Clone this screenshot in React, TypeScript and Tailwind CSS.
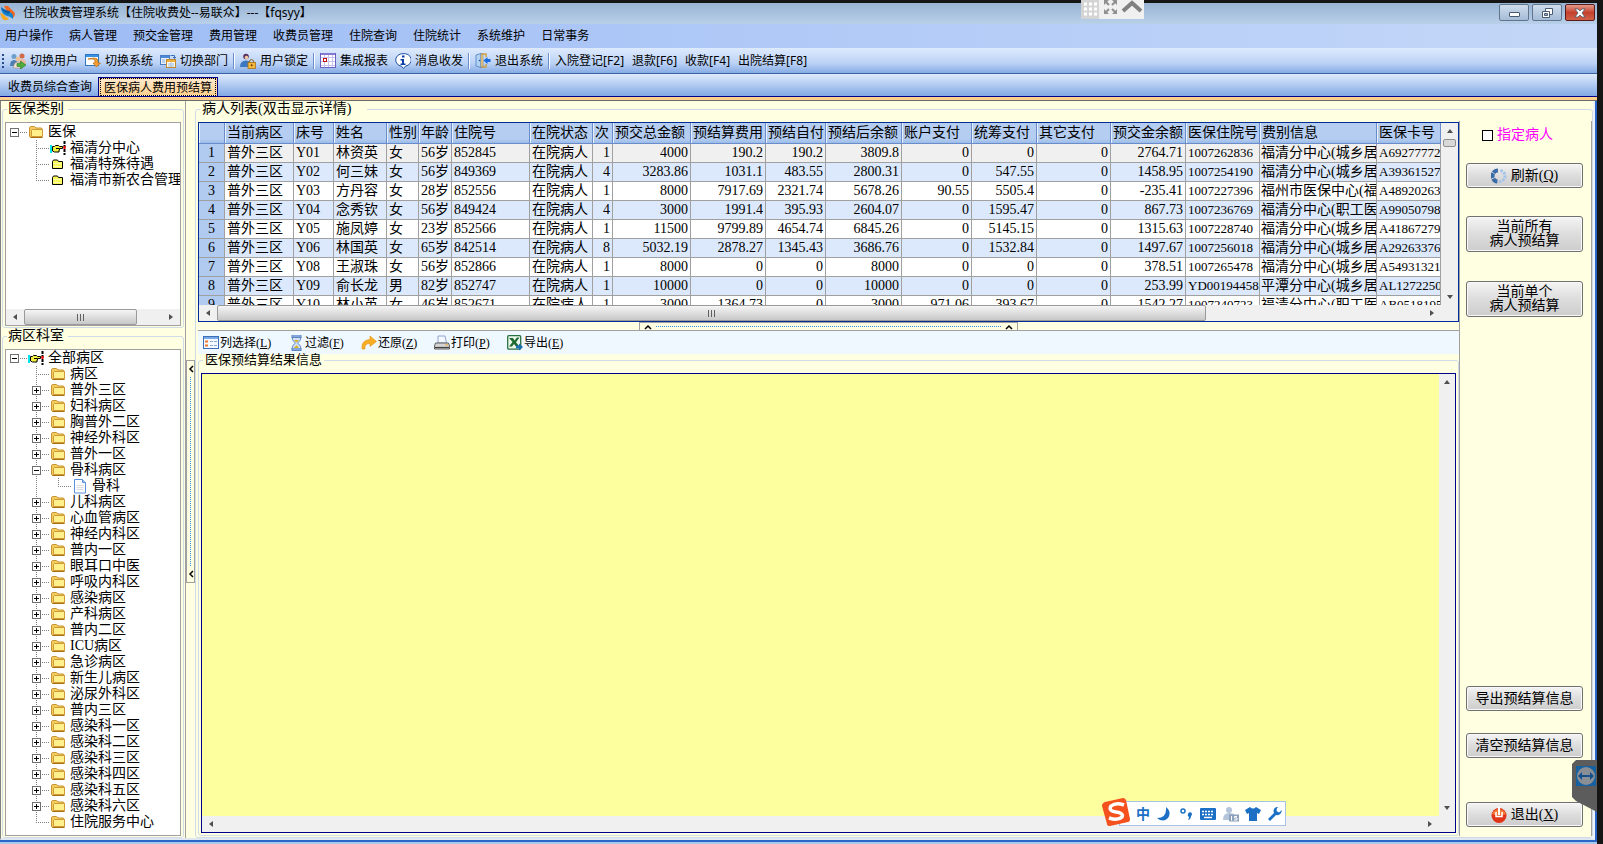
import { useState } from "react";
import type { ReactNode } from "react";

const MENUS = ["用户操作", "病人管理", "预交金管理", "费用管理", "收费员管理", "住院查询", "住院统计", "系统维护", "日常事务"];

const COLUMNS = [
  { label: "", width: "w-[26px]", cell: "bg-[#b0caf0] text-center" },
  { label: "当前病区", width: "w-[69px]", cell: "pl-[2px]" },
  { label: "床号", width: "w-[40px]", cell: "pl-[2px]" },
  { label: "姓名", width: "w-[53px]", cell: "pl-[2px]" },
  { label: "性别", width: "w-[32px]", cell: "pl-[2px]" },
  { label: "年龄", width: "w-[33px]", cell: "pl-[2px]" },
  { label: "住院号", width: "w-[78px]", cell: "pl-[2px]" },
  { label: "在院状态", width: "w-[63px]", cell: "pl-[2px]" },
  { label: "次", width: "w-[20px]", cell: "pr-[2px] text-right" },
  { label: "预交总金额", width: "w-[78px]", cell: "pr-[2px] text-right" },
  { label: "预结算费用", width: "w-[75px]", cell: "pr-[2px] text-right" },
  { label: "预结自付", width: "w-[60px]", cell: "pr-[2px] text-right" },
  { label: "预结后余额", width: "w-[76px]", cell: "pr-[2px] text-right" },
  { label: "账户支付", width: "w-[70px]", cell: "pr-[2px] text-right" },
  { label: "统筹支付", width: "w-[65px]", cell: "pr-[2px] text-right" },
  { label: "其它支付", width: "w-[74px]", cell: "pr-[2px] text-right" },
  { label: "预交金余额", width: "w-[75px]", cell: "pr-[2px] text-right" },
  { label: "医保住院号", width: "w-[74px]", cell: "pl-[2px] text-[13px]" },
  { label: "费别信息", width: "w-[117px]", cell: "pl-px" },
  { label: "医保卡号", width: "", cell: "pl-[2px] text-[13px]" },
];

const PATIENTS = [
  ["1", "普外三区", "Y01", "林资英", "女", "56岁", "852845", "在院病人", "1", "4000", "190.2", "190.2", "3809.8", "0", "0", "0", "2764.71", "1007262836", "福清分中心(城乡居", "A69277772"],
  ["2", "普外三区", "Y02", "何三妹", "女", "56岁", "849369", "在院病人", "4", "3283.86", "1031.1", "483.55", "2800.31", "0", "547.55", "0", "1458.95", "1007254190", "福清分中心(城乡居", "A39361527"],
  ["3", "普外三区", "Y03", "方丹容", "女", "28岁", "852556", "在院病人", "1", "8000", "7917.69", "2321.74", "5678.26", "90.55", "5505.4", "0", "-235.41", "1007227396", "福州市医保中心(福", "A48920263"],
  ["4", "普外三区", "Y04", "念秀钦", "女", "56岁", "849424", "在院病人", "4", "3000", "1991.4", "395.93", "2604.07", "0", "1595.47", "0", "867.73", "1007236769", "福清分中心(职工医", "A99050798"],
  ["5", "普外三区", "Y05", "施凤婷", "女", "23岁", "852566", "在院病人", "1", "11500", "9799.89", "4654.74", "6845.26", "0", "5145.15", "0", "1315.63", "1007228740", "福清分中心(城乡居", "A41867279"],
  ["6", "普外三区", "Y06", "林国英", "女", "65岁", "842514", "在院病人", "8", "5032.19", "2878.27", "1345.43", "3686.76", "0", "1532.84", "0", "1497.67", "1007256018", "福清分中心(城乡居", "A29263376"],
  ["7", "普外三区", "Y08", "王淑珠", "女", "56岁", "852866", "在院病人", "1", "8000", "0", "0", "8000", "0", "0", "0", "378.51", "1007265478", "福清分中心(城乡居", "A54931321"],
  ["8", "普外三区", "Y09", "俞长龙", "男", "82岁", "852747", "在院病人", "1", "10000", "0", "0", "10000", "0", "0", "0", "253.99", "YD00194458", "平潭分中心(城乡居", "AL1272250"],
  ["9", "普外三区", "Y10", "林小英", "女", "46岁", "852671", "在院病人", "1", "3000", "1364.73", "0", "3000", "971.06", "393.67", "0", "1542.27", "1007240723", "福清分中心(职工医", "AB0518195"],
];

type Node = { label: string; level: number; icon: "folder" | "hand" | "small" | "doc"; mark?: "plus" | "minus"; last?: boolean };

const INSURANCE: Node[] = [
  { label: "医保", level: 0, icon: "folder", mark: "minus" },
  { label: "福清分中心", level: 1, icon: "hand" },
  { label: "福清特殊待遇", level: 1, icon: "small" },
  { label: "福清市新农合管理", level: 1, icon: "small", last: true },
];

const ward = (label: string): Node => ({ label, level: 1, icon: "folder", mark: "plus" });

const WARDS: Node[] = [
  { label: "全部病区", level: 0, icon: "hand", mark: "minus" },
  { label: "病区", level: 1, icon: "folder" },
  ...["普外三区", "妇科病区", "胸普外二区", "神经外科区", "普外一区"].map(ward),
  { label: "骨科病区", level: 1, icon: "folder", mark: "minus" },
  { label: "骨科", level: 2, icon: "doc", last: true },
  ...[
    "儿科病区", "心血管病区", "神经内科区", "普内一区", "眼耳口中医", "呼吸内科区", "感染病区", "产科病区", "普内二区",
    "ICU病区", "急诊病区", "新生儿病区", "泌尿外科区", "普内三区", "感染科一区", "感染科二区", "感染科三区",
    "感染科四区", "感染科五区", "感染科六区",
  ].map(ward),
  { label: "住院服务中心", level: 1, icon: "folder", last: true },
];

const UI = "font-['Noto_Sans','Noto_Sans_CJK_SC',sans-serif]";
const BUTTON =
  "flex shrink-0 items-center justify-center rounded-[3px] border border-[#707070] bg-linear-to-b from-[#f4f4f4] from-0% via-[#dddddd] via-50% to-[#cdcdcd] leading-[14px] shadow-[inset_0_0_0_1px_#f8f8f8]";

/* ---------- icons ---------- */

function TreeIcon({ kind }: { kind: Node["icon"] }) {
  if (kind === "folder")
    return (
      <svg className="h-4 w-4 shrink-0" viewBox="0 0 16 16">
        <path d="M1.500 12.500V4q0-1 1-1.500h4l1.500 1.500h5q1 0 1 1v8.500H3z" fill="#f3cd60" stroke="#c8922c" />
        <path d="M3.500 12.500V6.500q0-1 1-1h10v7z" fill="#fff08c" stroke="#d09a38" />
        <path d="M2.500 13.500h12" stroke="#a87010" />
      </svg>
    );
  if (kind === "hand")
    return (
      <svg className="h-4 w-4 shrink-0" viewBox="0 0 16 16">
        <path d="M0 5h2v8H0z" fill="#00e5f0" />
        <path d="M2.500 6.500h2l1-1h3l1 1h3v2H9.500v1.500H9V12H4.500l-2-1z" fill="#f4f040" stroke="#000" />
        <path d="M6 8.500h3" stroke="#000" />
        <path d="M14.500 1v14" stroke="#000" strokeWidth="2" strokeDasharray="3 1" />
        <path d="M14.500 6v3" stroke="#f00" strokeWidth="2" />
      </svg>
    );
  if (kind === "small")
    return (
      <svg className="h-4 w-4 shrink-0" viewBox="0 0 16 16">
        <path d="M2.500 12.500v-7l1-1.500h4l1 1.500h4v7z" fill="#f8f85a" stroke="#000" />
        <path d="M3.500 7.500h8" stroke="#fff" strokeDasharray="1 1" />
        <path d="M3.500 10.500h8" stroke="#fff" strokeDasharray="1 1" />
      </svg>
    );
  return (
    <svg className="h-4 w-4 shrink-0" viewBox="0 0 16 16">
      <path d="M2.500 1.500h8l3 3v10.500h-11z" fill="#fafcff" stroke="#5d92d8" />
      <path d="M10.500 1.500v3h3" fill="#9cc2f0" stroke="#5d92d8" />
      <path d="M4.500 7.500h7M4.500 9.500h7M4.500 11.500h7" stroke="#dcdcdc" />
    </svg>
  );
}

function Arrow({ dir }: { dir: "up" | "down" | "left" | "right" }) {
  const d = { up: "M1 6l3-4 3 4z", down: "M1 2l3 4 3-4z", left: "M6 1L2 4l4 3z", right: "M2 1l4 3-4 3z" }[dir];
  return (
    <svg className="h-2 w-2" viewBox="0 0 8 8">
      <path d={d} fill="#505050" />
    </svg>
  );
}

const UsersIcon = () => (
  <svg className="h-4 w-4" viewBox="0 0 16 16">
    <circle cx="4" cy="3.500" r="2.500" fill="#6fa0cc" />
    <circle cx="12" cy="3" r="2.500" fill="#d06a48" />
    <path d="M0 13q0-6 4-6t4 6z" fill="#4d7fb0" />
    <path d="M9 10q0-4 3.500-4T16 11z" fill="#f0b8a0" />
    <circle cx="8" cy="6" r="2.300" fill="#f0c090" />
    <path d="M3.500 15q0-6 4.500-6 3 0 4 3v3z" fill="#f2e2d4" stroke="#a08070" strokeWidth=".5" />
    <path d="M7 10.500h3.500V8L16 12l-5.500 4v-2.500H7z" fill="#4fae3a" stroke="#2a7a20" strokeWidth=".6" />
  </svg>
);

const SystemIcon = () => (
  <svg className="h-4 w-4" viewBox="0 0 16 16">
    <rect x=".5" y="1.500" width="13" height="11" fill="#fff" stroke="#2b78c8" />
    <path d="M1 2h12v2H1z" fill="#3a90e0" />
    <path d="M3 6h5q2 0 2 3v1h-2l3.500 4L15.500 10H13V8q0-3-4-3z" fill="#f5a030" stroke="#c06a10" strokeWidth=".7" />
  </svg>
);

const DeptIcon = () => (
  <svg className="h-4 w-4" viewBox="0 0 16 16">
    <rect x=".5" y="2.500" width="9" height="9" fill="#e6f0fc" stroke="#4a7cc0" />
    <path d="M1 3h8v2H1z" fill="#4a88d8" />
    <path d="M2 7h3M2 9h3" stroke="#8fb0dc" />
    <rect x="6.500" y="6.500" width="9" height="8" fill="#fffaf0" stroke="#c08a30" />
    <path d="M7 7h8v2H7z" fill="#f0b040" />
    <path d="M8 11h6M8 13h6M11 9v5" stroke="#a0c0e0" />
    <path d="M10.500 2.500h4v3M13 4l1.500 1.500L16 4" fill="none" stroke="#3a70c0" />
  </svg>
);

const LockIcon = () => (
  <svg className="h-4 w-4" viewBox="0 0 16 16">
    <circle cx="6" cy="3.500" r="2.800" fill="#5a3060" />
    <circle cx="6.500" cy="4.500" r="1.800" fill="#f0c8a0" />
    <path d="M0 14q0-6.500 6-6.500T11 14z" fill="#3c78c0" />
    <path d="M9.500 10V8q2-3 4 0v2" fill="none" stroke="#907040" strokeWidth="1.200" />
    <rect x="8" y="9.500" width="7.500" height="6" fill="#f5b840" stroke="#a87010" strokeWidth=".8" />
    <circle cx="11.700" cy="12.300" r="1" fill="#6a4000" />
  </svg>
);

const ReportIcon = () => (
  <svg className="h-4 w-4" viewBox="0 0 16 16">
    <rect x=".5" y=".5" width="15" height="14" fill="#fff" stroke="#6a60c0" />
    <path d="M1 4.500h14M1 8.500h14M1 12.500h14M4.500 1v13M8.500 1v13M12.500 1v13" stroke="#c8c2ee" />
    <path d="M1 1h14" stroke="#8478d0" strokeWidth="2" />
    <rect x="3.500" y="5.500" width="3" height="3" fill="#fff" stroke="#c01010" />
  </svg>
);

const InfoIcon = () => (
  <svg className="h-4 w-4" viewBox="0 0 16 16">
    <path d="M8 .7a7 6.300 0 0 1 2.500 12.400L8.500 15.500 6.500 13.200A7 6.300 0 0 1 8 .7z" fill="#fff" stroke="#1d4fa0" />
    <path d="M7 2.500h2.500v2H7zM5.500 6H9v4.500h1.500V12h-5v-1.500H7V7.500H5.500z" fill="#0a3fa8" />
  </svg>
);

const DoorIcon = () => (
  <svg className="h-4 w-4" viewBox="0 0 16 16">
    <path d="M1 2l5-1.500v14L1 13z" fill="#b4d2f2" stroke="#4a80c0" strokeWidth=".8" />
    <path d="M7 1h4v3M7 14h4v-3" fill="none" stroke="#d0a040" strokeWidth="1.500" />
    <path d="M6 .5l2 1v12l-2 1z" fill="#f0d890" stroke="#806040" strokeWidth=".5" />
    <path d="M15.500 6v3h-3v2L8.500 7.500l4-3.500v2z" fill="#1a6ae0" />
    <circle cx="4.500" cy="7.500" r=".8" fill="#1a50a0" />
  </svg>
);

const ColumnsIcon = () => (
  <svg className="h-4 w-4" viewBox="0 0 16 16">
    <rect x=".5" y="1.500" width="15" height="12" fill="#f4f9ff" stroke="#3c6eb8" />
    <path d="M1 3h14" stroke="#78a8e8" strokeWidth="2" />
    <path d="M2 5.500h3v2H2zM2 9.500h3v2H2z" fill="#f07828" />
    <path d="M7 6.500h3M11 6.500h3M7 10.500h3M11 10.500h3" stroke="#8aa8d0" />
  </svg>
);

const FilterIcon = () => (
  <svg className="h-4 w-4" viewBox="0 0 16 16">
    <path d="M4 2h9q0 4-3.500 6Q13 10 13 14H4q0-4 3.500-6Q4 6 4 2z" fill="#cfe2f8" stroke="#6888c0" />
    <path d="M3.500 0h10v3h-10zM3.500 13h10v3h-10z" fill="#5e86c4" />
    <path d="M4.500 1h8M4.500 14h8" stroke="#a8c4ec" />
    <path d="M6 5h5L8.500 7.500zM6 13l2.500-3 2.500 3z" fill="#d8b020" />
  </svg>
);

const RestoreIcon = () => (
  <svg className="h-4 w-4" viewBox="0 0 16 16">
    <path d="M1 14Q0 5 9 4.500V1l6.500 5.500-6.500 5V8.500Q3 8.500 4 14z" fill="#f8ae24" stroke="#e09010" strokeWidth=".6" />
  </svg>
);

const PrintIcon = () => (
  <svg className="h-4 w-4" viewBox="0 0 16 16">
    <path d="M4 8V1h7l1.500 7z" fill="#f4f8ff" stroke="#7890c0" strokeWidth=".8" />
    <path d="M1.500 8h13l1 3v3H.5v-3z" fill="#d4d4d4" stroke="#505050" strokeWidth=".9" />
    <path d="M1 12.500h14" stroke="#404040" strokeWidth="1.200" />
    <path d="M11 10h3" stroke="#f0a030" />
  </svg>
);

const ExcelIcon = () => (
  <svg className="h-4 w-4" viewBox="0 0 16 16">
    <rect x=".7" y=".7" width="13" height="13.500" rx="1" fill="#eef8ee" stroke="#2a7040" strokeWidth="1.300" />
    <path d="M2 3h4l1.500 2.500L10 2.500h2.500L9 7.300 12.500 11.500H9L7 9l-2 2.500H2L5.500 7z" fill="#1f6a30" />
    <path d="M9 10.500h3V8.500l4 3.500-4 3.500v-2H9z" fill="#1a70b0" />
  </svg>
);

/* ---------- small parts ---------- */

function Key({ text, k }: { text: string; k: string }) {
  return (
    <span>
      {text}(<u>{k}</u>)
    </span>
  );
}

function Tree({ nodes, label }: { nodes: Node[]; label: string }) {
  return (
    <ul aria-label={label}>
      {nodes.map((n) => {
        const x = n.level === 2 ? 26 : 4;
        const root = n.level === 0;
        return (
          <li key={n.label} className={`flex h-4 items-center whitespace-nowrap ${root ? "pl-1" : "pl-[26px]"}`}>
            <svg className={`h-4 shrink-0 ${n.level === 2 ? "w-10" : "w-[18px]"}`} viewBox={n.level === 2 ? "0 0 40 16" : "0 0 18 16"}>
              {n.level === 2 && <path d="M4.500 0v16" stroke="#808080" strokeDasharray="1 1" />}
              {!root && <path d={`M${x}.5 0v${n.last ? 8 : 16}`} stroke="#808080" strokeDasharray="1 1" />}
              <path d={`M${x} 8.500h13`} stroke="#808080" strokeDasharray="1 1" />
              {n.mark && <rect x=".5" y="4.500" width="8" height="8" fill="#fff" stroke="#707070" />}
              {n.mark && <path d={n.mark === "plus" ? "M2 8.500h5M4.500 6v5" : "M2 8.500h5"} stroke="#000" />}
            </svg>
            <TreeIcon kind={n.icon} />
            <span className="ml-1">{n.label}</span>
          </li>
        );
      })}
    </ul>
  );
}

function HScroll({ thumb }: { thumb?: string }) {
  return (
    <div className="flex h-4 shrink-0 items-center bg-[#f0f0f0]">
      <button aria-label="向左" className="flex w-[18px] shrink-0 justify-center">
        <Arrow dir="left" />
      </button>
      <div className="flex h-full flex-1">
        {thumb && (
          <div className={`flex items-center justify-center gap-[2px] rounded-[2px] border border-[#9a9a9a] bg-linear-to-b from-[#f5f5f5] to-[#c8c8c8] ${thumb}`}>
            <i className="h-[7px] w-px bg-[#606060]" />
            <i className="h-[7px] w-px bg-[#606060]" />
            <i className="h-[7px] w-px bg-[#606060]" />
          </div>
        )}
      </div>
      <button aria-label="向右" className="flex w-[18px] shrink-0 justify-center">
        <Arrow dir="right" />
      </button>
    </div>
  );
}

function Tool({ icon, children }: { icon?: ReactNode; children: ReactNode }) {
  return (
    <button className="flex items-center gap-1 whitespace-nowrap">
      {icon}
      {children}
    </button>
  );
}

function GridTool({ icon, text, k }: { icon: ReactNode; text: string; k: string }) {
  return (
    <button className="flex min-w-[59px] items-center gap-px whitespace-nowrap">
      {icon}
      <Key text={text} k={k} />
    </button>
  );
}

const Divider = () => <i className="mx-[5px] h-4 w-[2px] border-l border-[#6a8ccb] bg-white" />;

function TitleBar() {
  return (
    <header className={`flex h-[21px] shrink-0 items-center bg-linear-to-b from-[#98b4d2] to-[#b9d0ea] pb-[2px] text-xs ${UI}`}>
      <svg className="h-4 w-[15px]" viewBox="0 0 15 16">
        <path d="M4 1q4-1 6 2l5 5q0 3-2 5L9 8Q6 6 4 1z" fill="#f06820" />
        <path d="M0 8q3 0 5 3l4 3q-5 3-7-1z" fill="#f8a820" />
        <path d="M1 2q3 5 8 5 5 1 4 7-3-3-6-3-6-2-6-9z" fill="#1583d0" />
        <path d="M1 2q5 4 9 4l-1 3Q3 8 1 2z" fill="#1060a8" />
      </svg>
      <h1 className="ml-2">住院收费管理系统【住院收费处--易联众】---【fqsyy】</h1>
      <div className="mr-[2px] ml-auto flex gap-[3px]">
        <button aria-label="最小化" className="flex h-[17px] w-[30px] items-center justify-center rounded-[2px] border border-[#61758c] bg-linear-to-b from-[#cfdded] to-[#a5bcd6]">
          <i className="mt-1 h-[5px] w-[11px] rounded-[1px] border border-[#4b5a6c] bg-white" />
        </button>
        <button aria-label="还原" className="flex h-[17px] w-[30px] items-center justify-center rounded-[2px] border border-[#61758c] bg-linear-to-b from-[#cfdded] to-[#a5bcd6]">
          <svg className="h-3 w-3" viewBox="0 0 12 12">
            <path d="M4.500 1.500h7v6h-7z" fill="#fff" stroke="#4b5a6c" />
            <path d="M1.500 4.500h7v6h-7z" fill="#fff" stroke="#4b5a6c" />
            <path d="M3.500 6.500h3v2h-3z" fill="#9db4cf" stroke="#4b5a6c" />
          </svg>
        </button>
        <button aria-label="关闭" className="flex h-[17px] w-[30px] items-center justify-center rounded-[2px] border border-[#5a1a1a] bg-linear-to-b from-[#e09a8c] from-0% via-[#c4402c] via-50% to-[#d06048]">
          <svg className="h-[10px] w-3" viewBox="0 0 12 10">
            <path d="M1 1h3l2 2 2-2h3L8 5l3 4H8L6 7 4 9H1l3-4z" fill="#fff" stroke="#4a5a70" strokeWidth=".8" />
          </svg>
        </button>
      </div>
    </header>
  );
}

function MainToolbar() {
  return (
    <div className={`flex h-[26px] shrink-0 items-center border-b border-[#3a62a4] bg-linear-to-b from-[#deeafd] from-0% via-[#bcd3f6] via-60% to-[#86abe4] pl-[2px] text-xs ${UI}`}>
      <i className="mr-[6px] h-[14px] border-l-2 border-dotted border-[#2a4a8c]" />
      <div className="flex gap-[7px]">
        <Tool icon={<UsersIcon />}>切换用户</Tool>
        <Tool icon={<SystemIcon />}>切换系统</Tool>
        <Tool icon={<DeptIcon />}>切换部门</Tool>
      </div>
      <Divider />
      <Tool icon={<LockIcon />}>用户锁定</Tool>
      <Divider />
      <div className="flex gap-[7px]">
        <Tool icon={<ReportIcon />}>集成报表</Tool>
        <Tool icon={<InfoIcon />}>消息收发</Tool>
      </div>
      <Divider />
      <Tool icon={<DoorIcon />}>退出系统</Tool>
      <Divider />
      <div className="flex gap-2">
        <Tool>入院登记[F2]</Tool>
        <Tool>退款[F6]</Tool>
        <Tool>收款[F4]</Tool>
        <Tool>出院结算[F8]</Tool>
      </div>
    </div>
  );
}

function PatientGrid() {
  return (
    <div className="flex h-[200px] shrink-0 flex-col border border-[#002d96] bg-white">
      <div className="flex min-h-0 flex-1">
        <div className="min-w-0 flex-1 overflow-hidden">
          <table className="w-full table-fixed border-separate border-spacing-0 whitespace-nowrap">
            <colgroup>
              {COLUMNS.map((c) => (
                <col key={c.label} className={c.width} />
              ))}
            </colgroup>
            <thead>
              <tr>
                {COLUMNS.map((c) => (
                  <th key={c.label} className="overflow-hidden border-r border-b border-r-[#6a8ccb] border-b-[#6a8ccb] bg-linear-to-b from-[#b4cdf1] from-80% to-[#9abbe8] p-0 pl-[2px] text-left leading-[20px] font-normal shadow-[inset_1px_0_0_#e6f0fc]">
                    {c.label}
                  </th>
                ))}
              </tr>
            </thead>
            <tbody>
              {PATIENTS.map((row, r) => (
                <tr key={row[0]} className={r === 0 ? "bg-[#f0f0f0]" : r % 2 ? "bg-[#dce9fc]" : "bg-white"}>
                  {row.map((cell, i) => (
                    <td key={i} className={`overflow-hidden border-r border-b border-[#a0a0a0] p-0 leading-[18px] ${COLUMNS[i].cell}`}>
                      {cell}
                    </td>
                  ))}
                </tr>
              ))}
            </tbody>
          </table>
        </div>
        <div className="flex w-[17px] shrink-0 flex-col items-center justify-between bg-[#f0f0f0] py-1">
          <button aria-label="向上" className="flex flex-col items-center gap-1">
            <Arrow dir="up" />
            <i className="h-2 w-[13px] rounded-[2px] border border-[#909090] bg-[#d8d8d8]" />
          </button>
          <button aria-label="向下">
            <Arrow dir="down" />
          </button>
        </div>
      </div>
      <div className="flex bg-[#f0f0f0]">
        <div className="flex-1">
          <HScroll thumb="w-[82%]" />
        </div>
        <div className="w-[17px]" />
      </div>
    </div>
  );
}

function SidePanel() {
  return (
    <aside className="mt-1 flex w-[133px] shrink-0 flex-col border-x border-[#a0a0a0] pr-2 pb-[9px] pl-[6px]">
      <label className="mt-[6px] flex h-4 items-center gap-1 pl-4 text-[#ff00ff]">
        <input type="checkbox" className="h-[11px] w-[11px] appearance-none border border-black bg-white" />
        指定病人
      </label>
      <button className={`mt-[20px] h-[25px] gap-1 ${BUTTON}`}>
        <svg className="h-4 w-4" viewBox="0 0 16 16" fill="none">
          <path d="M7 2.500A5.500 5.500 0 0 0 7 13.500" stroke="#3a6ca8" strokeWidth="4" strokeDasharray="5 .6" />
          <path d="M8 13.500A5.500 5.500 0 0 0 9 2.500" stroke="#a4c4e8" strokeWidth="3" strokeDasharray="2.500 1" />
        </svg>
        <Key text="刷新" k="Q" />
      </button>
      <button className={`mt-[28px] h-[36px] ${BUTTON}`}>
        当前所有
        <br />
        病人预结算
      </button>
      <button className={`mt-[29px] h-[36px] ${BUTTON}`}>
        当前单个
        <br />
        病人预结算
      </button>
      <button className={`mt-auto h-[25px] ${BUTTON}`}>导出预结算信息</button>
      <button className={`mt-[22px] h-[25px] ${BUTTON}`}>清空预结算信息</button>
      <button className={`mt-[44px] h-[25px] gap-1 ${BUTTON}`}>
        <svg className="h-4 w-4" viewBox="0 0 16 16">
          <circle cx="8" cy="8.500" r="7.500" fill="#e03418" />
          <path d="M1 7a7.500 7.500 0 0 1 14 0Q8 10 1 7z" fill="#f47a3c" />
          <path d="M5 5v4.500h6V5" fill="none" stroke="#fff" strokeWidth="1.500" />
          <path d="M8 0v8" stroke="#fff" strokeWidth="2" />
        </svg>
        <Key text="退出" k="X" />
      </button>
    </aside>
  );
}

function ImeBar() {
  return (
    <div className="absolute right-[317px] bottom-[18px] flex h-[25px] w-[167px] items-center justify-between border border-[#a8c4e4] bg-white pr-[2px] pl-4 text-[#1b70c6]">
      <svg className="absolute -top-[5px] -left-[19px] h-[30px] w-[30px]" viewBox="0 0 30 30">
        <path d="M4 5L22 1q2 0 3 2l4 19q0 3-2 3L9 29q-3 0-3-2L1 9q0-3 3-4z" fill="#f4511e" />
        <path d="M23 8Q15 5 10 9q-3 5 5 6 8 1 6 5-4 4-13 1" fill="none" stroke="#fff" strokeWidth="3.500" />
      </svg>
      <span className={`text-[14px] font-bold ${UI}`}>中</span>
      <svg className="h-4 w-4" viewBox="0 0 16 16">
        <path d="M10 1q6 5 2 11-5 5-11 0 10 0 9-11z" fill="#1b70c6" />
      </svg>
      <svg className="h-4 w-4" viewBox="0 0 16 16">
        <circle cx="5" cy="5" r="2" fill="none" stroke="#1b70c6" strokeWidth="1.500" />
        <path d="M10 8a2 2 0 1 1 3 2q0 3-3 4 1-2 1-3-2-1-1-3z" fill="#1b70c6" />
      </svg>
      <svg className="h-4 w-4" viewBox="0 0 16 16">
        <rect y="2" width="16" height="12" rx="1" fill="#1b70c6" />
        <path d="M2 5.500h12M2 8.500h12" stroke="#fff" strokeWidth="1.500" strokeDasharray="2 1" />
        <path d="M4 11.500h8" stroke="#fff" strokeWidth="1.500" />
      </svg>
      <svg className="h-4 w-4" viewBox="0 0 16 16">
        <circle cx="6" cy="4" r="3" fill="#b4c4da" />
        <path d="M0 14Q0 7 6 7t6 3v4z" fill="#b4c4da" />
        <rect x="6" y="8.500" width="10" height="7" fill="#8ea2bd" />
        <path d="M8.500 10v4.500M14 10.500h-2.500v1.500H14v2h-3" fill="none" stroke="#fff" />
      </svg>
      <svg className="h-4 w-4" viewBox="0 0 16 16">
        <path d="M5 1q3 3 6 0l5 3-2 4-2-1v8H4V7L2 8 0 4z" fill="#1b70c6" />
      </svg>
      <svg className="h-4 w-4" viewBox="0 0 16 16">
        <path d="M15 4l-3 2.500-2.500-1.500L10 2l1.500-1Q7 .5 6.500 5l.5 2-6 6 2 2 6-6q5 1 6-5z" fill="#1b70c6" />
      </svg>
    </div>
  );
}

function Chevron({ up }: { up?: boolean }) {
  return (
    <svg className="h-2 w-2 shrink-0" viewBox="0 0 8 8">
      <path d={up ? "M1 6l3-3 3 3" : "M6 1L3 4l3 3"} fill="none" stroke="#000" strokeWidth="1.500" />
    </svg>
  );
}

function Splitter({ vertical }: { vertical?: boolean }) {
  return vertical ? (
    <div className="flex w-[9px] shrink-0 flex-col pt-[259px]">
      <div className="flex h-[223px] flex-col items-center border border-[#a0a0a0] py-1">
        <Chevron />
        <i className="my-1 flex-1 border-l border-dotted border-[#3a8af0]" />
        <Chevron />
      </div>
    </div>
  ) : (
    <div className="flex h-[9px] shrink-0 justify-center border-b border-[#a0a0a0]">
      <div className="flex w-[30%] items-center border border-b-0 border-[#a0a0a0] px-1">
        <Chevron up />
        <i className="mx-1 flex-1 border-t border-dotted border-[#3a8af0]" />
        <Chevron up />
      </div>
    </div>
  );
}

export default function App() {
  const [tab, setTab] = useState(1);

  return (
    <div className="relative h-screen overflow-hidden bg-[#151515] pt-[3px] pr-[6px] font-['Liberation_Serif','Noto_Sans_CJK_SC',sans-serif] text-sm text-black">
      <div className="flex h-full flex-col bg-[#2a66c8]">
        <TitleBar />

        <nav className={`flex h-6 shrink-0 items-center gap-4 bg-linear-to-r from-[#9dbcf5] to-[#c4d7f8] pl-[5px] text-xs ${UI}`}>
          {MENUS.map((m) => (
            <button key={m}>{m}</button>
          ))}
        </nav>

        <MainToolbar />

        {/* Tabs */}
        <div className={`flex h-[23px] shrink-0 items-end border-b border-[#00008b] bg-linear-to-b from-[#dfebfd] to-[#83a9e4] text-xs ${UI}`}>
          {["收费员综合查询", "医保病人费用预结算"].map((t, i) => (
            <button
              key={t}
              onClick={() => setTab(i)}
              className={`h-[19px] ${
                tab === i ? "border border-b-0 border-[#00008b] bg-[#ffd9a0] px-px" : "pt-px pr-[6px] pl-2 leading-[18px]"
              }`}
            >
              <span className={tab === i ? "block border border-dotted border-black bg-linear-to-b from-[#ffe9cc] to-[#ffcf8c] px-[3px] pt-px leading-[15px]" : ""}>{t}</span>
            </button>
          ))}
        </div>
        <div className="h-[4px] shrink-0 border-b border-[#6d6d6d] bg-[#ffcf8c]" />

        {/* Work area */}
        <div className="mr-[2px] flex min-h-0 flex-1 border-r-2 border-b-2 border-l border-r-[#eef2f8] border-b-[#dfe6f0] border-l-[#808080] bg-[#ffffe1]">
          <div className="flex w-[185px] shrink-0 flex-col border-r border-[#a0a0a0] px-px">
            <fieldset className="min-w-0 rounded-[3px] border border-[#d0dbe8] px-[2px] pb-px">
              <legend className="ml-[2px] h-4 px-px pr-1 leading-4">医保类别</legend>
              <div className="mt-[5px] flex h-[204px] flex-col border border-[#a0a0a0] bg-white">
                <div className="min-h-0 flex-1 overflow-hidden pt-px">
                  <Tree nodes={INSURANCE} label="医保类别" />
                </div>
                <HScroll thumb="w-[82%]" />
              </div>
            </fieldset>
            <fieldset className="flex min-h-0 min-w-0 flex-1 flex-col rounded-[3px] border border-[#d0dbe8] px-[2px] pb-px">
              <legend className="ml-[2px] h-4 px-px pr-1 leading-4">病区科室</legend>
              <div className="mt-[5px] min-h-0 flex-1 overflow-hidden border border-[#a0a0a0] bg-white">
                <Tree nodes={WARDS} label="病区科室" />
              </div>
            </fieldset>
          </div>

          <Splitter vertical />

          <fieldset className="flex min-w-0 flex-1 rounded-[3px] border border-[#d0dbe8] pb-px pl-[2px]">
            <legend className="ml-[2px] h-4 px-[2px] pr-4 leading-4">病人列表(双击显示详情)</legend>
            <div className="flex min-w-0 flex-1 flex-col pt-[5px]">
              <PatientGrid />
              <Splitter />
              <div className="flex h-[23px] shrink-0 items-center gap-[14px] bg-[#f0f8ff] pl-[5px] text-xs">
                <button className="flex min-w-[71px] items-center gap-px whitespace-nowrap">
                  <ColumnsIcon />
                  <Key text="列选择" k="L" />
                </button>
                <GridTool icon={<FilterIcon />} text="过滤" k="F" />
                <GridTool icon={<RestoreIcon />} text="还原" k="Z" />
                <GridTool icon={<PrintIcon />} text="打印" k="P" />
                <GridTool icon={<ExcelIcon />} text="导出" k="E" />
              </div>
              <fieldset className="flex min-h-0 min-w-0 flex-1 flex-col rounded-[3px] border border-[#d0dbe8] px-[2px] pb-[2px]">
                <legend className="ml-[2px] h-3 px-[2px] text-[13px] leading-3">医保预结算结果信息</legend>
                <div className="mt-[7px] flex min-h-0 flex-1 flex-col border border-[#00008b] bg-[#f0f0f0]">
                  <div className="flex min-h-0 flex-1">
                    <textarea aria-label="医保预结算结果信息" className="flex-1 resize-none bg-[#fdff9f] outline-none" />
                    <div className="flex w-4 shrink-0 flex-col items-center justify-between py-1">
                      <Arrow dir="up" />
                      <Arrow dir="down" />
                    </div>
                  </div>
                  <div className="pr-4">
                    <HScroll />
                  </div>
                </div>
              </fieldset>
            </div>
            <SidePanel />
          </fieldset>
        </div>
        <div className="mt-[2px] h-[2px] shrink-0 bg-[#a9c8ee]" />
      </div>

      {/* Remote session handle */}
      <div className="absolute top-0 left-[1081px] flex h-[19px] w-[63px] items-center justify-between bg-[#f0f0f0]">
        <svg className="h-full w-full" viewBox="0 0 63 19">
          <path d="M0 0h18v19H0z" fill="#d4d4d4" />
          <path d="M3 4h14M3 9h14M3 14h14" stroke="#fff" strokeWidth="3" strokeDasharray="3 2" />
          <path d="M23 0h5l-5 5zM36 0v5l-5-5zM23 14v-5l5 5zM36 14h-5l5-5z" fill="#909090" />
          <path d="M25 2l3 3M34 2l-3 3M25 12l3-3M34 12l-3-3" stroke="#909090" strokeWidth="2" />
          <path d="M42 11l9-8 9 8" fill="none" stroke="#808080" strokeWidth="4" />
        </svg>
      </div>

      <ImeBar />

      <svg className="absolute right-[6px] bottom-[32px] h-[52px] w-[25px]" viewBox="0 0 25 52">
        <path d="M4 0h21v52L4 41 0 37V4z" fill="#5c5c5c" />
        <rect x="4" y="6" width="20" height="20" fill="#16619f" />
        <circle cx="14" cy="16" r="9" fill="#8a8f96" />
        <path d="M6 16l4-4v3h8v-3l4 4-4 4v-3h-8v3z" fill="#16508a" />
      </svg>
    </div>
  );
}
